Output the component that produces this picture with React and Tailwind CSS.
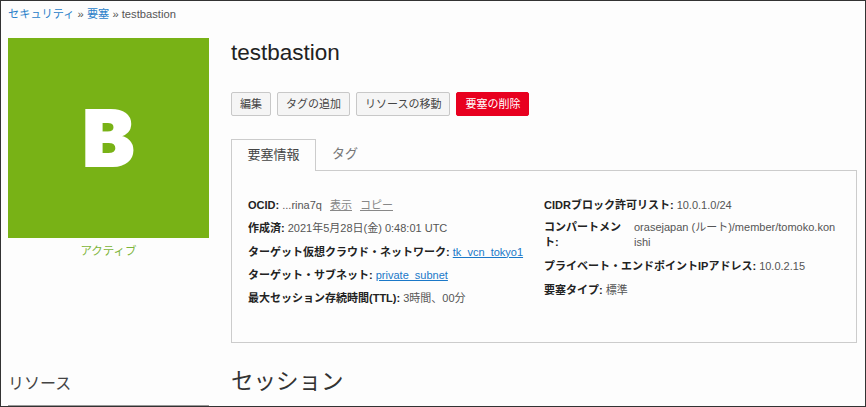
const FONT = "font-['Liberation_Sans','Noto_Sans_CJK_JP',sans-serif]";

const LEFT_DETAILS = [
  { label: '作成済:', value: '2021年5月28日(金) 0:48:01 UTC' },
  { label: 'ターゲット仮想クラウド・ネットワーク:', link: 'tk_vcn_tokyo1' },
  { label: 'ターゲット・サブネット:', link: 'private_subnet' },
  { label: '最大セッション存続時間(TTL):', value: '3時間、00分' },
];

function Btn({ children, danger }) {
  const tone = danger
    ? 'bg-[#e8001f] border-[#e8001f] text-white'
    : 'bg-[#f5f5f5] border-[#c8c8c8] text-[#444]';
  return (
    <button className={`h-[24px] px-[8px] rounded-[2px] border text-[11px] leading-none ${tone}`}>
      {children}
    </button>
  );
}

function Detail({ label, value, link }) {
  return (
    <div className="h-[23.25px] leading-[16px] whitespace-nowrap">
      <b className="font-bold text-[#222]">{label}</b>{' '}
      {link ? <a className="text-[#1b78c8] underline">{link}</a> : <span>{value}</span>}
    </div>
  );
}

export default function App() {
  return (
    <div className={`${FONT} w-[866px] h-[407px] overflow-hidden border border-[#333] bg-[#fdfdfd] text-[#555] text-[11px]`}>
      <div className="h-[37px] pl-[7px] pt-[5px] text-[11.2px] leading-[16px]">
        <a className="text-[#2a7fc9]">セキュリティ</a> » <a className="text-[#2a7fc9]">要塞</a> » testbastion
      </div>

      <div className="flex h-[368px]">
        <div className="w-[201px] ml-[7px] flex flex-col shrink-0">
          <div className="h-[200px] bg-[#78b216] flex items-center justify-center text-white font-['Inter',sans-serif] font-black text-[77px] leading-none [-webkit-text-stroke:2px_white]">
            B
          </div>
          <div className="mt-[5px] text-center text-[11.5px] leading-[16px] text-[#7db53a]">アクティブ</div>
          <div className="mt-auto h-[35px] border-b border-[#999] text-[16px] leading-[26px] text-[#444]">リソース</div>
        </div>

        <div className="ml-[22px] w-[626px] flex flex-col">
          <h1 className="h-[54px] text-[22.5px] leading-[30px] text-[#222]">testbastion</h1>
          <div className="flex gap-[6px]">
            <Btn>編集</Btn>
            <Btn>タグの追加</Btn>
            <Btn>リソースの移動</Btn>
            <Btn danger>要塞の削除</Btn>
          </div>

          <div className="mt-[23px] flex h-[31px] relative z-10 text-[13px]">
            <div className="w-[85px] h-[32px] bg-[#fdfdfd] border border-b-0 border-[#ccc] text-center leading-[30px] text-[#444]">要塞情報</div>
            <div className="w-[58px] text-center leading-[30px] text-[#777]">タグ</div>
          </div>

          <div className="h-[173px] border border-[#ccc] grid grid-cols-[296px_1fr] pl-[16px] pt-[26px]">
            <div>
              <div className="h-[23.25px] leading-[16px] whitespace-nowrap">
                <b className="font-bold text-[#222]">OCID:</b> ...rina7q
                <a className="ml-[8px] underline text-[#888]">表示</a>
                <a className="ml-[8px] underline text-[#888]">コピー</a>
              </div>
              {LEFT_DETAILS.map((d) => (
                <Detail key={d.label} {...d} />
              ))}
            </div>
            <div>
              <Detail label="CIDRブロック許可リスト:" value="10.0.1.0/24" />
              <div className="flex h-[38px] leading-[15px]">
                <b className="w-[90px] font-bold text-[#222] shrink-0">コンパートメント:</b>
                <span className="w-[203px] break-all">orasejapan (ルート)/member/tomoko.konishi</span>
              </div>
              <Detail label="プライベート・エンドポイントIPアドレス:" value="10.0.2.15" />
              <Detail label="要塞タイプ:" value="標準" />
            </div>
          </div>

          <h2 className="mt-[24px] text-[22.5px] leading-[30px] text-[#333]">セッション</h2>
        </div>
      </div>
    </div>
  );
}
